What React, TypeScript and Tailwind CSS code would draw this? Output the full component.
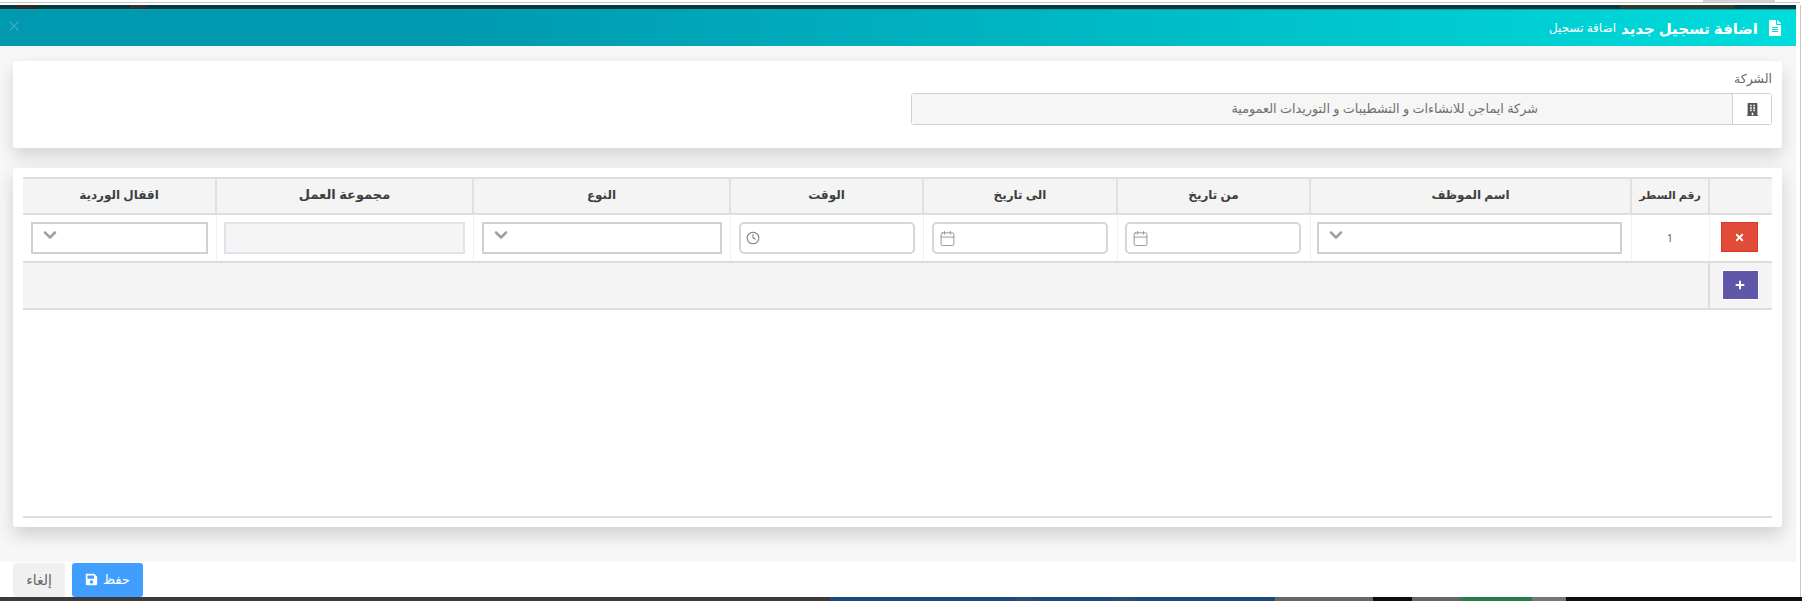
import React from "react";
import { ChevronDown, Calendar, Clock, X, Plus } from "lucide-react";
import { FaBuilding, FaFileAlt, FaSave } from "react-icons/fa";

const headers = [
  { title: "", w: "w-[63px]", text: "text-[12px]" },
  { title: "رقم السطر", w: "w-[78px]", text: "text-[11px]" },
  { title: "اسم الموظف", w: "w-[321px]", text: "text-[12px]" },
  { title: "من تاريخ", w: "w-[193px]", text: "text-[12px]" },
  { title: "الى تاريخ", w: "w-[194px]", text: "text-[12px]" },
  { title: "الوقت", w: "w-[193px]", text: "text-[12px]" },
  { title: "النوع", w: "w-[257px]", text: "text-[12px]" },
  { title: "مجموعة العمل", w: "w-[257px]", text: "text-[13px]" },
  { title: "اقفال الوردية", w: "w-[193px]", text: "text-[12px]" },
];

// what shows of the page behind the dialog, left to right
const bottomStrip = [
  { w: "w-[830px]", bg: "bg-[#3a3a3a]" },
  { w: "w-[186px]", bg: "bg-[#1d4a7c]" },
  { w: "w-[19px]", bg: "bg-[#2a4a70]" },
  { w: "w-[79px]", bg: "bg-[#1d4a7c]" },
  { w: "w-[20px]", bg: "bg-[#2a4a70]" },
  { w: "w-[141px]", bg: "bg-[#1d4a7c]" },
  { w: "w-[98px]", bg: "bg-[#666666]" },
  { w: "w-[39px]", bg: "bg-[#0c0c0c]" },
  { w: "w-[49px]", bg: "bg-[#666666]" },
  { w: "w-[71px]", bg: "bg-[#2c7a45]" },
  { w: "w-[34px]", bg: "bg-[#777777]" },
  { w: "w-[236px]", bg: "bg-[#101010]" },
];

const SelectBox = () => (
  <div className="flex h-[32px] items-start justify-end border-2 border-[#d0d0d0] bg-white pl-[7px] pt-[1px]">
    <ChevronDown size={20} strokeWidth={3} className="text-[#a0a0a0]" />
  </div>
);

const DateBox = ({ icon }: { icon: React.ReactNode }) => (
  <div className="flex h-[32px] items-center justify-end rounded-[5px] border-2 border-[#d6d6d6] bg-white pl-[5px] text-[#8a8a8a]">
    {icon}
  </div>
);

const App = () => {
  return (
    <div
      dir="rtl"
      className="flex h-[601px] w-[1802px] flex-col overflow-hidden bg-white text-[#444444] font-['Noto_Sans','DejaVu_Sans',sans-serif]"
    >
      <div className="flex h-[2px] bg-white">
        <div className="mr-[27px] h-[2px] w-[72px] bg-[#d4d4d4]" />
      </div>
      <div className="h-[1px] bg-[#c8c8c8] mr-[2px]" />
      <div className="h-[2px] bg-white" />

      <div className="flex flex-1 pr-[1px]">
        <div className="flex flex-1 flex-col border-r border-[#c8c8c8] pr-[4px]">
          <div className="flex h-[4px] bg-[#04383e]">
            <div className="mr-[61px] h-[4px] w-[115px] bg-[#2e3a30]" />
            <div className="mr-[1473px] h-[4px] w-[17px] bg-[#333035]" />
            <div className="mr-[93px] h-[4px] w-[22px] bg-[#33282c]" />
          </div>
          <header className="flex h-[37px] items-center justify-between border-t border-[#00a6a8] bg-gradient-to-l from-[#00dcdc] to-[#0099b0] to-75% pl-[6px] pr-[13px] text-white">
            <div className="flex items-center">
              <FaFileAlt size={16} />
              <span className="mr-[9px] text-[15px] font-bold leading-none">اضافة تسجيل جديد</span>
              <span className="mr-[5px] text-[12px] leading-none">اضافة تسجيل</span>
            </div>
            <X size={16} strokeWidth={2.5} className="mb-[5px] text-[#3aaabb]" />
          </header>

          <main className="flex flex-1 flex-col gap-[20px] bg-[#f7f7f7] pl-[13px] pr-[14px] pt-[15px]">
            <section className="h-[87px] rounded-[3px] bg-white pr-[10px] pt-[11px] shadow-[0_8px_18px_rgba(0,0,0,0.14)]">
              <label className="block text-[12.5px] leading-[14px] text-[#666666]">الشركة</label>
              <div className="mt-[7px] flex h-[32px] w-[861px] rounded-[3px] border border-[#ccd2d8]">
                <div className="flex w-[39px] items-center justify-center border-l border-[#ccd2d8] bg-white text-[#555555]">
                  <FaBuilding size={13} />
                </div>
                <div className="flex flex-1 items-center bg-[#f6f6f6] pr-[194px] text-[12.8px] text-[#707070]">
                  شركة ايماجن للانشاءات و التشطيبات و التوريدات العمومية
                </div>
              </div>
            </section>

            <section className="h-[359px] rounded-[3px] bg-white px-[10px] pt-[9px] shadow-[0_8px_18px_rgba(0,0,0,0.16)]">
              <div className="flex h-[341px] flex-col border-b-2 border-[#dddddd]">
                <table className="w-[1749px] table-fixed border-collapse">
                  <thead>
                    <tr className="h-[36px] border-t-2 border-b-2 border-[#dddddd] bg-[#f4f4f4]">
                      {headers.map((h, i) => (
                        <th
                          key={i}
                          className={`${h.w} ${h.text} border-l-2 border-[#e0e0e0] p-0 pb-[2px] text-center font-bold text-[#3f3f3f] last:border-l-0`}
                        >
                          {h.title}
                        </th>
                      ))}
                    </tr>
                  </thead>
                  <tbody>
                    <tr className="h-[48px] border-b-2 border-[#dddddd]">
                      <td className="border-l border-[#f0f0f0] p-0 pr-[2px] text-center">
                        <button className="mb-[2px] inline-flex h-[30px] w-[37px] items-center justify-center border border-[#d9372a] bg-[#e04c38] text-white">
                          <X size={11} strokeWidth={4} />
                        </button>
                      </td>
                      <td className="border-l border-[#f0f0f0] p-0 text-center text-[11px] text-[#666666]">1</td>
                      <td className="border-l border-[#f0f0f0] pl-[6px] pr-[9px]"><SelectBox /></td>
                      <td className="border-l border-[#f0f0f0] pl-[7px] pr-[9px]"><DateBox icon={<Calendar size={17} strokeWidth={1.2} />} /></td>
                      <td className="border-l border-[#f0f0f0] pl-[8px] pr-[9px]"><DateBox icon={<Calendar size={17} strokeWidth={1.2} />} /></td>
                      <td className="border-l border-[#f0f0f0] pl-[8px] pr-[8px]"><DateBox icon={<Clock size={14} strokeWidth={1.75} className="text-[#777777]" />} /></td>
                      <td className="border-l border-[#f0f0f0] pl-[8px] pr-[8px]"><SelectBox /></td>
                      <td className="border-l border-[#f0f0f0] pl-[7px] pr-[8px]">
                        <div className="h-[32px] border-2 border-[#dde3ea] bg-[#f5f5f5]" />
                      </td>
                      <td className="pl-[8px] pr-[8px]"><SelectBox /></td>
                    </tr>
                    <tr className="h-[47px] border-b-2 border-[#dddddd] bg-[#f4f4f4]">
                      <td className="border-l-2 border-[#dddddd] p-0 pr-[2px] text-center">
                        <button className="mb-[2px] inline-flex h-[30px] w-[37px] items-center justify-center border border-white bg-[#5f58a8] text-white">
                          <Plus size={12} strokeWidth={4} />
                        </button>
                      </td>
                      <td colSpan={8} className="p-0" />
                    </tr>
                  </tbody>
                </table>
              </div>
            </section>
            <div className="flex-1" />
          </main>

          <footer className="flex h-[35px] flex-row-reverse items-center justify-start gap-[7px] bg-white pl-[13px]">
            <button className="flex h-[34px] w-[52px] items-center justify-center rounded-[3px] bg-[#f0f0f0] text-[14px] text-[#666666]">
              إلغاء
            </button>
            <button className="flex h-[34px] w-[71px] items-center justify-center gap-[5px] rounded-[3px] bg-[#409eff] text-[13px] text-white">
              حفظ
              <FaSave size={13} />
            </button>
          </footer>
        </div>
      </div>
      <div dir="ltr" className="flex h-[4px] shrink-0">
        {bottomStrip.map((s, i) => (
          <div key={i} className={`${s.w} ${s.bg} h-[4px]`} />
        ))}
      </div>
    </div>
  );
};

export default App;
